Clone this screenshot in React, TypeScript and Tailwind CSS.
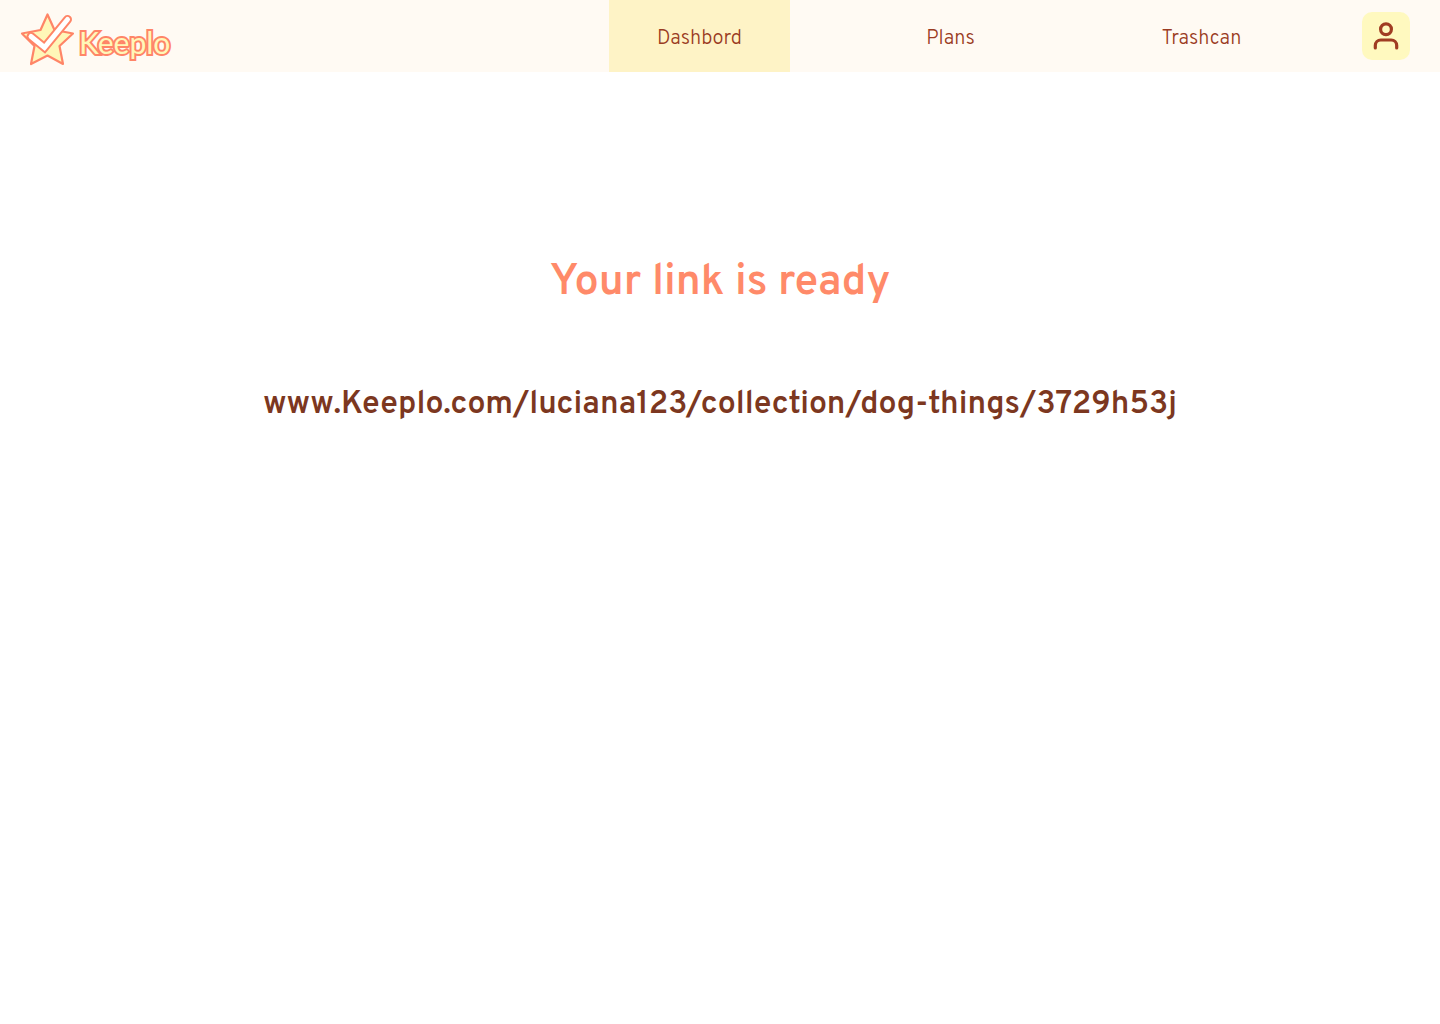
const tabs = [
  { label: "Dashbord", active: true },
  { label: "Plans", active: false },
  { label: "Trashcan", active: false },
];

function Logo() {
  return (
    <a href="#" aria-label="Keeplo home" className="block">
      <svg width="154" height="60" viewBox="20 6 154 60" fill="none">
        <path
          d="M47.5 14.5L54.5 30L73 33.5L59.5 46L63 64L47.5 55.5L31 64L34.5 46L22 33.5L40.5 30Z"
          fill="#fff7b8"
          stroke="#ff8567"
          strokeWidth="2.2"
          strokeLinejoin="round"
        />
        <path d="M31 36.5L44.5 47.5L67.5 19.5" stroke="#ff8567" strokeWidth="9" strokeLinecap="round" />
        <path d="M31 36.5L44.5 47.5L67.5 19.5" stroke="#ffffff" strokeWidth="5" strokeLinecap="round" />
        <circle cx="25.5" cy="34.5" r="0.8" fill="#fff7b8" />
        <text
          x="79"
          y="54"
          fontSize="30"
          fill="#fff7b8"
          stroke="#ff8567"
          strokeWidth="4"
          strokeLinejoin="miter"
          paintOrder="stroke"
          className="font-['Lato',sans-serif] font-normal"
        >
          Keeplo
        </text>
      </svg>
    </a>
  );
}

function UserIcon() {
  return (
    <svg
      width="36"
      height="36"
      viewBox="0 0 36 36"
      fill="none"
      stroke="currentColor"
      strokeWidth="3.2"
      strokeLinecap="round"
      strokeLinejoin="round"
      aria-hidden="true"
    >
      <circle cx="18" cy="11.3" r="5.4" />
      <path d="M7.3 30V27.5a5.5 5.5 0 0 1 5.5-5.5h10.4a5.5 5.5 0 0 1 5.5 5.5V30" />
    </svg>
  );
}

export default function App() {
  return (
    <div className="min-h-screen bg-white font-['Overpass','Roboto',sans-serif]">
      <header className="flex h-18 items-center justify-between bg-[#fffaf3] pr-[30px] pl-5">
        <Logo />
        <div className="flex items-center gap-[70px]">
          <nav className="flex gap-[70px]">
            {tabs.map((tab) => (
              <a
                key={tab.label}
                href="#"
                aria-current={tab.active ? "page" : undefined}
                className={`flex h-18 w-[181px] items-center justify-center pt-1.5 text-xl font-light text-[#9a3b22] ${
                  tab.active ? "bg-amber-100" : ""
                }`}
              >
                {tab.label}
              </a>
            ))}
          </nav>
          <button
            type="button"
            aria-label="Account"
            className="flex size-12 items-center justify-center rounded-[10px] bg-[#fff9bf] text-[#a03c22]"
          >
            <UserIcon />
          </button>
        </div>
      </header>
      <main className="flex flex-col items-center gap-[74px] px-6 pt-[183px] text-center">
        <h1 className="text-[43px] leading-14 font-semibold text-[#ff8a69]">Your link is ready</h1>
        <a href="#" className="text-[32px] leading-10 font-semibold text-[#7c3720]">
          www.Keeplo.com/luciana123/collection/dog-things/3729h53j
        </a>
      </main>
    </div>
  );
}
